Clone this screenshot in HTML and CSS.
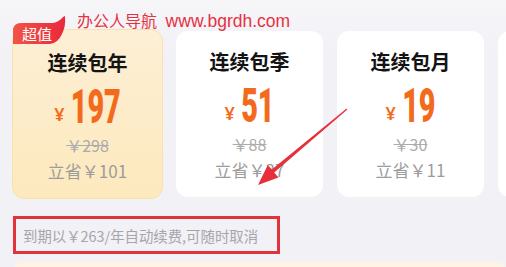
FILE: index.html
```html
<!DOCTYPE html>
<html lang="zh-CN">
<head>
<meta charset="utf-8">
<title>会员套餐</title>
<link rel="stylesheet" href="styles.css">
</head>
<body>
<div class="page">
  <div class="cards">
    <div class="card card--hot">
      <div class="badge">
        <svg class="badge__shape" width="54" height="30" viewBox="0 0 54 30">
          <defs>
            <linearGradient id="bg" x1="0" y1="0" x2="1" y2="0">
              <stop offset="0" stop-color="#f25447"/>
              <stop offset="1" stop-color="#e8293b"/>
            </linearGradient>
          </defs>
          <path d="M0,16 Q0,8 8,8 L40,8 Q46,7 50,2 L52,1 Q53,11 49,19 Q45,28 37,29 L0,29 Z" fill="url(#bg)"/>
        </svg>
        <span class="badge__text">超值</span>
      </div>
      <div class="title">连续包年</div>
      <div class="price"><span class="yen">¥</span><span class="num num--3">197</span></div>
      <div class="orig">￥298</div>
      <div class="save">立省￥101</div>
    </div>
    <div class="card">
      <div class="title">连续包季</div>
      <div class="price"><span class="yen">¥</span><span class="num num--2">51</span></div>
      <div class="orig">￥88</div>
      <div class="save">立省￥37</div>
    </div>
    <div class="card">
      <div class="title">连续包月</div>
      <div class="price"><span class="yen">¥</span><span class="num num--2">19</span></div>
      <div class="orig">￥30</div>
      <div class="save">立省￥11</div>
    </div>
    <div class="card card--peek"></div>
  </div>
  <div class="notice">到期以￥263/年自动续费,可随时取消</div>
  <div class="next"></div>

  <div class="watermark"><span class="watermark__cn">办公人导航</span> <span class="watermark__url">www.bgrdh.com</span></div>

  <svg class="arrow" width="506" height="267" viewBox="0 0 506 267">
    <polygon points="347.4,109.5 274.2,172.4 278.5,177.5 258,185 267.8,165 271.8,169.6 346.6,108.5" fill="#e8303c"/>
  </svg>
</div>
</body>
</html>
```

FILE: styles.css
```css
* { box-sizing: border-box; }

html, body {
  margin: 0;
  padding: 0;
}

body {
  width: 506px;
  height: 267px;
  overflow: hidden;
  background: #f2f2f7;
  font-family: "Noto Sans CJK SC", "Noto Sans", sans-serif;
}

.page {
  position: relative;
  width: 506px;
  height: 267px;
  overflow: hidden;
  background: linear-gradient(#f6f6f9, #f1f1f6 60px);
}

.cards {
  display: flex;
  align-items: center;
  gap: 14px;
  padding-left: 12px;
  padding-top: 29px;
}

.card {
  position: relative;
  flex: 0 0 147px;
  height: 166px;
  border-radius: 12px;
  background: #ffffff;
  display: flex;
  flex-direction: column;
  align-items: center;
  padding-top: 19px;
}

.card--hot {
  flex-basis: 151px;
  height: 170px;
  margin-right: -1px;
  padding-top: 21px;
  background: linear-gradient(180deg, #fdefd6 0%, #fde9bd 100%);
  border: 1px solid #f9e2ab;
}

.card--peek {
  flex: 0 0 40px;
  padding: 0;
}

.title {
  font-size: 20px;
  line-height: 24px;
  font-weight: 700;
  color: #141414;
}

.price {
  margin-top: 8px;
  height: 48px;
  line-height: 48px;
  display: flex;
  align-items: baseline;
  color: #f46a1c;
}

.yen {
  font-family: "Noto Sans", sans-serif;
  font-size: 18px;
  font-weight: 600;
  margin-right: 6px;
  position: relative;
  top: -2px;
}

.num {
  --n: 3;
  display: inline-block;
  font-family: Roboto, "Liberation Sans", sans-serif;
  font-size: 48px;
  font-weight: 900;
  transform: scaleX(0.6);
  margin-left: calc(var(--n) * -0.115em);
  margin-right: calc(var(--n) * -0.115em);
}

.num--2 { --n: 2; }
.num--3 { --n: 3; }

.orig {
  margin-top: 4px;
  font-size: 16px;
  line-height: 20px;
  color: #ababab;
  text-decoration: line-through;
  text-decoration-thickness: 1px;
}

.save {
  margin-top: 5px;
  font-size: 17px;
  line-height: 22px;
  color: #9c9c9c;
}

.notice {
  margin: 17px 0 0 13px;
  width: 267px;
  height: 38px;
  border: 3px solid #e2333c;
  display: flex;
  align-items: center;
  padding-left: 7px;
  font-size: 14.4px;
  color: #a6a6aa;
  white-space: nowrap;
}

.next {
  margin: 8px 0 0 13px;
  height: 20px;
  border-radius: 10px 10px 0 0;
  background: #fdf4e1;
}

.badge {
  position: absolute;
  left: 0;
  top: -15px;
  width: 54px;
  height: 30px;
}

.badge__shape {
  position: absolute;
  left: 0;
  top: 0;
  display: block;
}

.badge__text {
  position: absolute;
  left: 9px;
  top: 9px;
  font-size: 15px;
  line-height: 20px;
  color: #ffffff;
}

.watermark {
  position: absolute;
  left: 77px;
  top: 9px;
  line-height: 22px;
  color: #e6323f;
  white-space: nowrap;
}

.watermark__cn {
  font-size: 16px;
}

.watermark__url {
  font-family: "Liberation Sans", Arial, sans-serif;
  font-size: 17.5px;
  margin-left: 5px;
}

.arrow {
  position: absolute;
  left: 0;
  top: 0;
  pointer-events: none;
}
```
